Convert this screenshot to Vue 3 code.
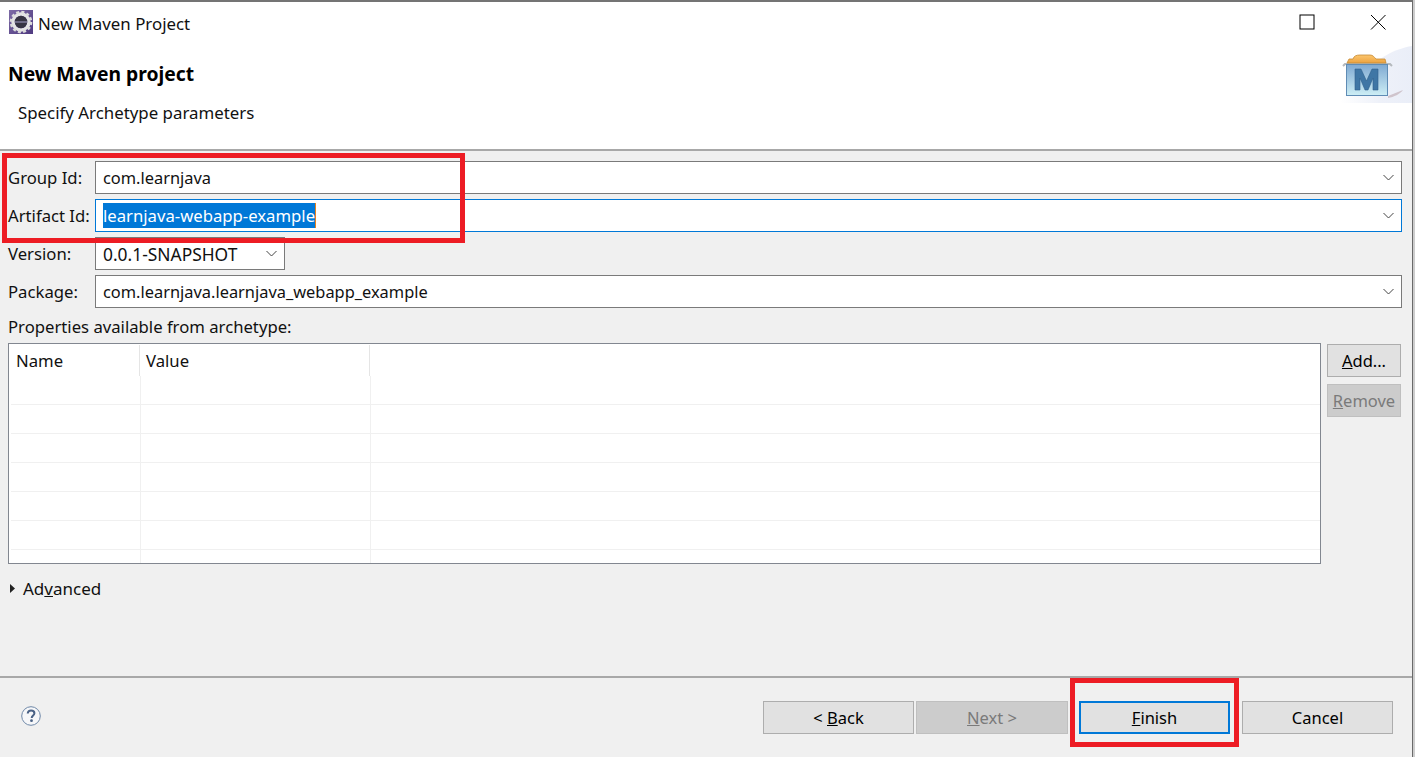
<script setup>
const fields = [
  { label: 'Group Id:', value: 'com.learnjava', cls: 'tight' },
  { label: 'Artifact Id:', value: 'learnjava-webapp-example', focused: true, cls: 'mid' },
  { label: 'Version:', value: '0.0.1-SNAPSHOT', small: true, cls: 'wide' },
  { label: 'Package:', value: 'com.learnjava.learnjava_webapp_example', cls: 'tight' }
]
const rows = 7
</script>

<template>
  <div class="window">
    <header class="titlebar">
      <svg class="app-icon" width="24" height="24" viewBox="0 0 24 24">
        <defs>
          <linearGradient id="ap" x1="0" y1="0" x2="1" y2="1">
            <stop offset="0" stop-color="#7d6ba6" />
            <stop offset="1" stop-color="#4f3a80" />
          </linearGradient>
        </defs>
        <rect width="24" height="24" fill="url(#ap)" />
        <circle cx="12" cy="12" r="8" fill="none" stroke="#e4e4e4" stroke-width="3.400" />
        <circle cx="12" cy="12" r="10" fill="none" stroke="#dcdcdc" stroke-width="2.600" stroke-dasharray="3 2.240" />
        <circle cx="12" cy="12" r="6.200" fill="#363442" />
        <rect x="6" y="11" width="12" height="2" fill="#6d6a85" />
      </svg>
      <span class="title">New Maven Project</span>
      <span class="spacer"></span>
      <svg class="win-btn max" width="16" height="16" viewBox="0 0 16 16"><rect x="1" y="1" width="14" height="14" fill="none" stroke="#000" stroke-width="1" /></svg>
      <svg class="win-btn close" width="16" height="16" viewBox="0 0 16 16"><path d="M1 1L15.500 15.500M15.500 1L1 15.500" stroke="#000" stroke-width="1" /></svg>
    </header>

    <section class="banner">
      <h1>New Maven project</h1>
      <p>Specify Archetype parameters</p>
      <svg class="maven" width="72" height="57" viewBox="0 0 72 57">
        <defs>
          <linearGradient id="pale" x1="0" y1="0" x2="1" y2="0">
            <stop offset="0" stop-color="#ffffff" />
            <stop offset=".55" stop-color="#eef1f9" />
            <stop offset="1" stop-color="#eaeef8" />
          </linearGradient>
          <linearGradient id="box" x1="0" y1="0" x2="0" y2="1">
            <stop offset="0" stop-color="#7fa9d2" />
            <stop offset="1" stop-color="#cdeef5" />
          </linearGradient>
          <linearGradient id="hat" x1="0" y1="0" x2="0" y2="1">
            <stop offset="0" stop-color="#fcc66e" />
            <stop offset="1" stop-color="#eda23f" />
          </linearGradient>
        </defs>
        <path d="M72 0C55 3 40 10 20 30C10 40 4 50 0 57H72Z" fill="url(#pale)" />
        <path d="M48 50L63 44C60 48 54 51 48 52Z" fill="#cfc4cc" />
        <path d="M3 20L5 18H50L52 20" fill="none" stroke="#b5b9bd" stroke-width="2" />
        <path d="M7 17L9 13H13C14 10 16 9 20 9H30C33 9 34 11 36 13H45L46 17Z" fill="url(#hat)" stroke="#c58a35" stroke-width=".800" />
        <rect x="6.500" y="18.500" width="41" height="31" fill="url(#box)" stroke="#5f8cb5" />
        <path d="M15 44V23H21L26.500 35L32 23H38V44H33V32L28 44H25L20 32V44Z" fill="#3f76a5" stroke="#2f5f8c" stroke-width=".600" />
      </svg>
    </section>

    <main class="content">
      <div class="form">
        <template v-for="f in fields" :key="f.label">
          <label class="field-label">{{ f.label }}</label>
          <div class="combo" :class="{ focused: f.focused, small: f.small }">
            <span class="combo-text" :class="f.cls"><span :class="{ selected: f.focused }">{{ f.value }}</span></span>
            <svg class="chevron" width="11" height="7" viewBox="0 0 11 7"><path d="M.5 1L5.500 6L10.500 1" fill="none" stroke="#444" stroke-width="1" /></svg>
          </div>
        </template>
      </div>

      <div class="props-label">Properties available from archetype:</div>

      <div class="props">
        <div class="table">
          <div class="thead">
            <div class="th name">Name</div>
            <div class="th value">Value</div>
          </div>
          <div v-for="r in rows" :key="r" class="tr">
            <div class="td name"></div>
            <div class="td value"></div>
            <div class="td rest"></div>
          </div>
        </div>
        <div class="side">
          <button class="btn side-btn"><u>A</u>dd...</button>
          <button class="btn side-btn disabled"><u>R</u>emove</button>
        </div>
      </div>

      <div class="advanced">
        <svg width="5" height="9" viewBox="0 0 5 9"><path d="M0 0L5 4.500L0 9Z" fill="#222" /></svg>
        <span>Ad<u>v</u>anced</span>
      </div>
    </main>

    <footer class="footer">
      <svg class="help" width="20" height="20" viewBox="0 0 20 20">
        <circle cx="10" cy="10" r="9.300" fill="#f6f7f9" stroke="#6f88a8" stroke-width="1" />
        <path d="M6.700 7.500C6.900 5.500 8.300 4.600 10.100 4.600C12 4.600 13.400 5.700 13.400 7.300C13.400 9.500 10.700 9.600 10.700 12" fill="none" stroke="#4a6286" stroke-width="2" />
        <circle cx="10.500" cy="14.700" r="1.400" fill="#4a6286" />
      </svg>
      <span class="spacer"></span>
      <button class="btn foot-btn back">&lt; <u>B</u>ack</button>
      <button class="btn foot-btn next disabled"><u>N</u>ext &gt;</button>
      <button class="btn foot-btn finish"><u>F</u>inish</button>
      <button class="btn foot-btn cancel">Cancel</button>
    </footer>

    <div class="annot annot-fields"></div>
    <div class="annot annot-finish"></div>
  </div>
</template>

<style>
html, body { margin: 0; padding: 0; background: #fff; }
</style>

<style scoped>
.window {
  position: relative;
  width: 1413px;
  height: 757px;
  box-sizing: border-box;
  border-top: 2px solid #747474;
  border-right: 1px solid #6a6a6a;
  box-shadow: 2px 0 0 #cdcdcd;
  background: #f0f0f0;
  display: flex;
  flex-direction: column;
  font-family: "Noto Sans", "Open Sans", sans-serif;
  font-size: 16.700px;
  color: #111;
}
.titlebar {
  height: 44px;
  box-sizing: border-box;
  padding: 0 0 4px 9px;
  background: #fff;
  display: flex;
  align-items: center;
  flex: none;
}
.app-icon { flex: none; }
.title { margin-left: 5px; margin-top: 2px; font-size: 16.850px; }
.spacer { flex: 1; }
.win-btn { flex: none; }
.max { margin-right: 55px; }
.close { margin-right: 26px; }
.banner {
  position: relative;
  height: 103px;
  background: #fff;
  border-bottom: 2px solid #a8a8a8;
  flex: none;
}
.banner h1 {
  margin: 0;
  padding: 15px 0 0 8px;
  font-size: 19.300px;
  line-height: 26px;
  font-weight: 700;
  color: #000;
}
.banner p {
  margin: 0;
  padding: 14px 0 0 18px;
  font-size: 16.850px;
  line-height: 24px;
}
.maven { position: absolute; right: 0; top: 0; }
.content {
  flex: 1;
  border-bottom: 2px solid #a8a8a8;
  padding: 10px 10px 0 8px;
  min-height: 0;
}
.form {
  display: grid;
  grid-template-columns: 87px 1fr;
  grid-auto-rows: 33px;
  row-gap: 5px;
  align-items: center;
}
.combo {
  height: 33px;
  box-sizing: border-box;
  background: #fff;
  border: 1px solid #7a7a7a;
  display: flex;
  align-items: center;
  padding: 0 7px;
}
.combo.focused { border-color: #0078d7; }
.combo.small { width: 190px; }
.combo-text { flex: 1; white-space: nowrap; }
.tight { font-size: 16.400px; }
.mid { font-size: 16.700px; }
.wide { font-size: 17.400px; }
.selected { background: #0078d7; color: #fff; border-right: 1px solid #e8821e; padding: 1px 0; }
.chevron { flex: none; }
.props-label { margin-top: 7px; height: 28px; line-height: 24px; }
.props { display: flex; align-items: flex-start; }
.table {
  width: 1313px;
  height: 221px;
  box-sizing: border-box;
  background: #fff;
  border: 1px solid #828790;
  overflow: hidden;
}
.thead { display: flex; height: 32px; align-items: stretch; }
.th {
  box-sizing: border-box;
  line-height: 32px;
  border-right: 1px solid #e5e5e5;
  margin-top: 1px;
}
.th.name { width: 131px; padding-left: 7px; }
.th.value { width: 230px; padding-left: 6px; }
.tr {
  display: flex;
  height: 29px;
  box-sizing: border-box;
  border-bottom: 1px solid #f0f0f0;
  margin-left: 2px;
}
.td { box-sizing: border-box; }
.td.name { width: 130px; border-right: 1px solid #f0f0f0; }
.td.value { width: 230px; border-right: 1px solid #f0f0f0; }
.td.rest { flex: 1; }
.side {
  margin-left: 6px;
  padding-top: 1px;
  display: flex;
  flex-direction: column;
  gap: 7px;
}
.btn {
  font-family: inherit;
  font-size: 16.500px;
  color: #000;
  box-sizing: border-box;
  background: #e1e1e1;
  border: 1px solid #adadad;
  padding: 2px 0 0;
  line-height: 1;
}
.btn.disabled {
  background: #cccccc;
  border-color: #bfbfbf;
  color: #7a7a7a;
}
.side-btn { width: 74px; height: 33px; }
.advanced {
  margin-top: 12px;
  margin-left: 2px;
  display: flex;
  align-items: center;
  gap: 8px;
  height: 24px;
  font-size: 17px;
}
.footer {
  height: 79px;
  flex: none;
  display: flex;
  align-items: center;
  padding: 0 19px 0 21px;
  box-sizing: border-box;
}
.help { flex: none; margin-bottom: 3px; }
.foot-btn { width: 151px; height: 33px; }
.next { margin-left: 2px; width: 152px; }
.finish { margin-left: 11px; border: 2px solid #0078d7; }
.cancel { margin-left: 12px; }
.annot {
  position: absolute;
  box-sizing: border-box;
  border: 5px solid #ed1c24;
  pointer-events: none;
}
.annot-fields { left: 2px; top: 151px; width: 463px; height: 90px; }
.annot-finish { left: 1070px; top: 676px; width: 169px; height: 69px; }
</style>
